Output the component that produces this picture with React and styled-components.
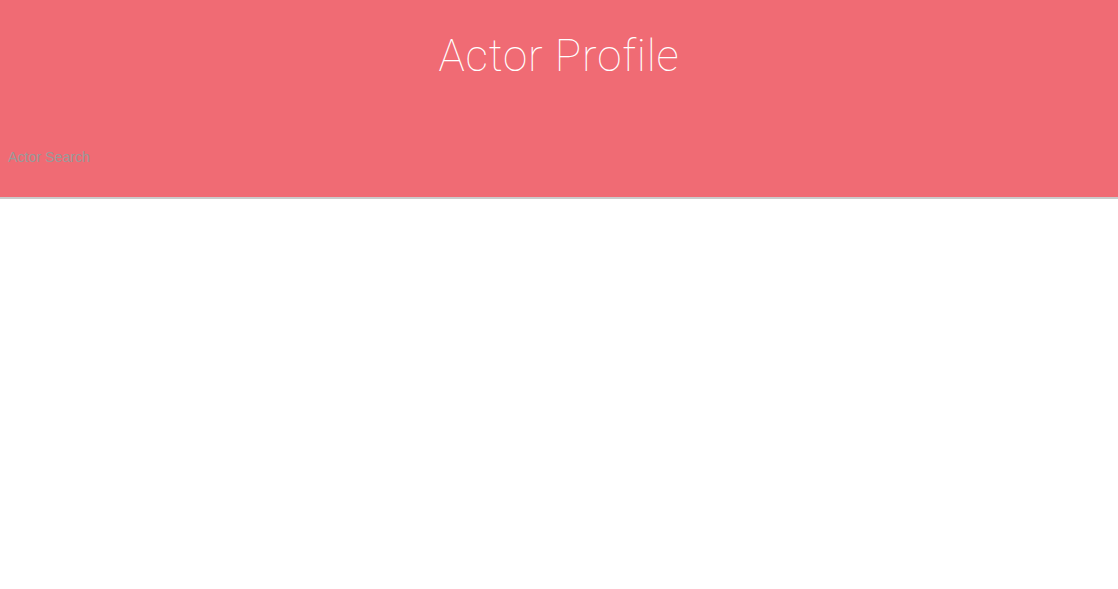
import React from "react";
import styled, { createGlobalStyle } from "styled-components";

const GlobalStyle = createGlobalStyle`
  html, body {
    margin: 0;
    padding: 0;
    background: #fff;
  }
`;

// Header bar with a soft grey edge below
const Header = styled.header`
  background-color: #f06b74;
  height: 197px;
  border-bottom: 2px solid #cbcbcb;
  box-shadow: 0 2px 4px rgba(0, 0, 0, 0.12);
  display: flex;
  flex-direction: column;
  position: relative;
  z-index: 1;
`;

const Title = styled.h1`
  margin: 0;
  padding-top: 26px;
  text-align: center;
  color: #fff;
  font-family: Roboto, "Liberation Sans", sans-serif;
  font-weight: 100;
  font-size: 44px;
  letter-spacing: 0.8px;
  line-height: 60px;
`;

// Search input
const SearchInput = styled.input`
  margin: 62px 0 0 8px;
  width: 200px;
  border: none;
  outline: none;
  background: transparent;
  padding: 0;
  font-family: "Liberation Sans", Arial, sans-serif;
  font-size: 14.2px;
  line-height: 18px;
  color: #333;

  &::placeholder {
    color: #9a9a9a;
  }
`;

const App = () => {
  return (
    <>
      <GlobalStyle />
      <Header>
        <Title>Actor Profile</Title>
        <SearchInput type="text" placeholder="Actor Search" />
      </Header>
    </>
  );
};

export default App;
